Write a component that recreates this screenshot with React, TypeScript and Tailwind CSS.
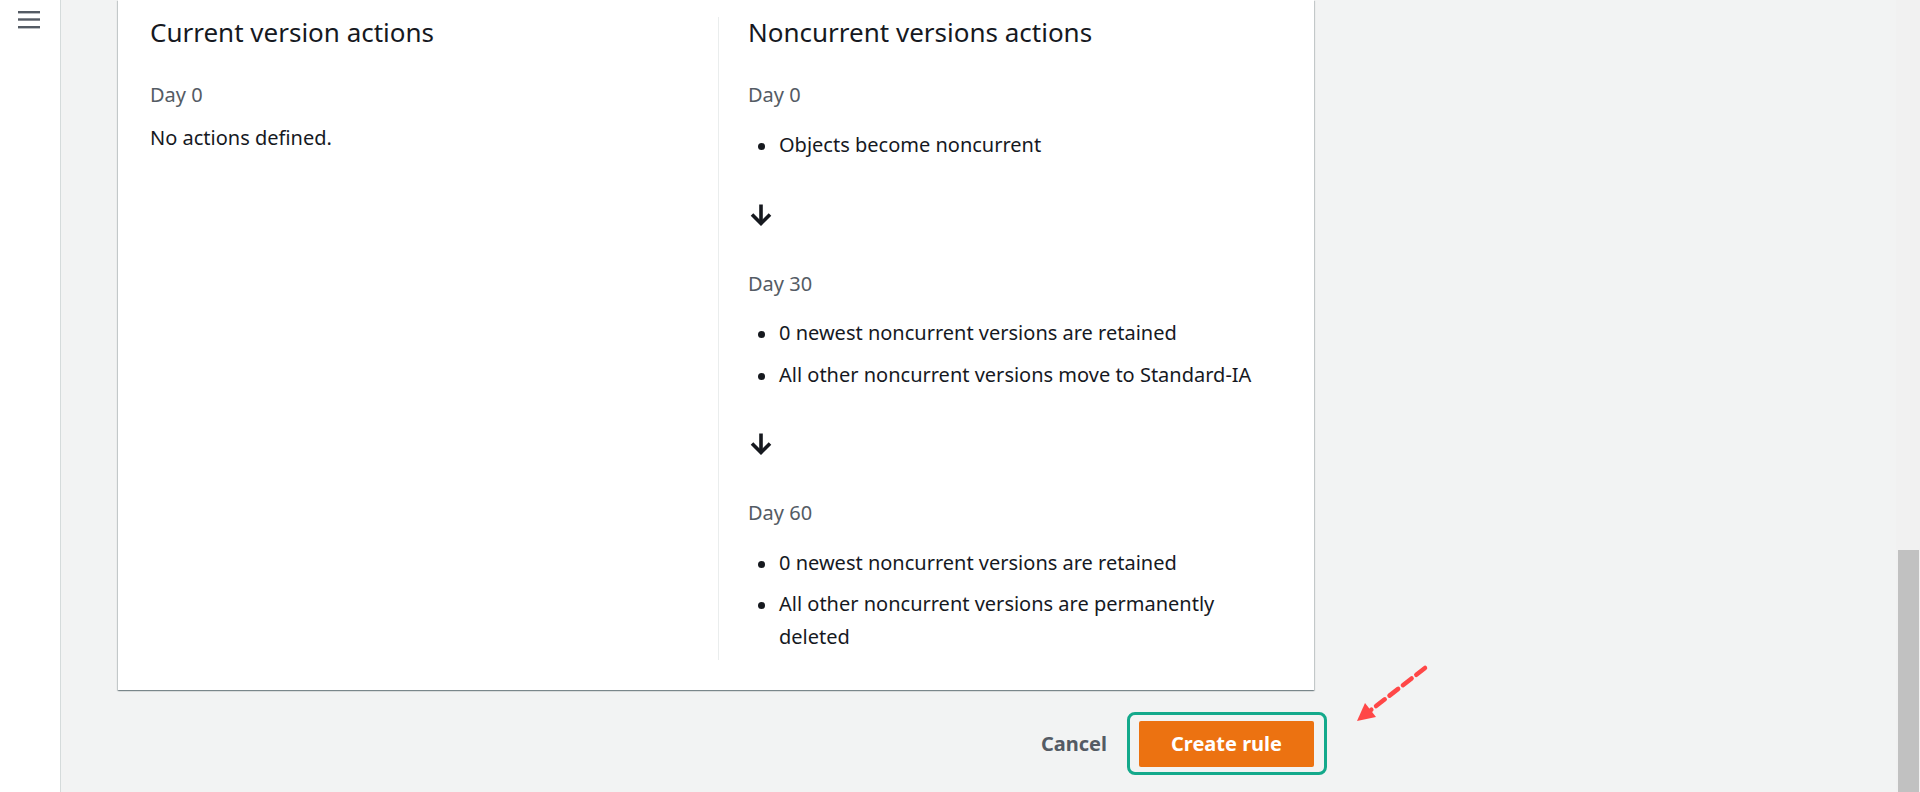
import React from "react";

const font = { fontFamily: '"Noto Sans", "Open Sans", Arial, sans-serif' };

function DownArrow() {
  return (
    <svg width="22" height="22" viewBox="0 0 22 22" className="block">
      <path d="M11 0.5 V19" stroke="#16191f" strokeWidth="3.6" fill="none" strokeLinecap="butt" />
      <path d="M2 10.5 L11 19.5 L20 10.5" stroke="#16191f" strokeWidth="3.6" fill="none" strokeLinejoin="miter" strokeLinecap="butt" />
    </svg>
  );
}

function Bullet({ children }: { children: React.ReactNode }) {
  return (
    <li className="flex items-start pl-[10px] text-[20px] leading-[33px] text-[#16191f]">
      <span className="mt-[15px] h-[7px] w-[7px] shrink-0 rounded-full bg-[#16191f]" />
      <span className="ml-[14px]">{children}</span>
    </li>
  );
}

function DayLabel({ children, className }: { children: React.ReactNode; className: string }) {
  return <div className={`text-[20px] leading-[33px] text-[#545b64] ${className}`}>{children}</div>;
}

export default function App() {
  return (
    <div className="flex h-[792px] w-[1920px] overflow-hidden bg-[#f2f3f3]" style={font}>
      <aside className="w-[61px] shrink-0 border-r border-[#d5dbdb] bg-white pl-[18px] pt-[10px]">
        <svg width="22" height="19" viewBox="0 0 22 19" className="block">
          <rect x="0" y="1" width="22" height="2.4" fill="#545b64" />
          <rect x="0" y="8.3" width="22" height="2.4" fill="#545b64" />
          <rect x="0" y="16" width="22" height="2.4" fill="#545b64" />
        </svg>
      </aside>

      <main className="flex-1 pl-[57px]">
        <div className="w-[1196px] bg-white pb-[30px] pt-[17px] shadow-[0_1px_1px_0_rgba(0,28,36,0.3),1px_1px_1px_0_rgba(0,28,36,0.15),-1px_1px_1px_0_rgba(0,28,36,0.15)]">
          <div className="grid grid-cols-[600px_1fr]">
            <div className="pl-[32px]">
              <h2 className="text-[26px] font-normal leading-[30px] text-[#16191f]">Current version actions</h2>
              <DayLabel className="mt-[31px]">Day 0</DayLabel>
              <p className="mt-[10px] text-[20px] leading-[33px] text-[#16191f]">No actions defined.</p>
            </div>
            <div className="border-l border-[#eaeded] pb-[7px] pl-[29px] pr-[30px]">
              <h2 className="text-[26px] font-normal leading-[30px] text-[#16191f]">Noncurrent versions actions</h2>
              <DayLabel className="mt-[31px]">Day 0</DayLabel>
              <ul className="mt-[17px]">
                <Bullet>Objects become noncurrent</Bullet>
              </ul>
              <div className="mt-[43px] pl-[2px]">
                <DownArrow />
              </div>
              <DayLabel className="mt-[41px]">Day 30</DayLabel>
              <ul className="mt-[16px] flex flex-col gap-[9px]">
                <Bullet>0 newest noncurrent versions are retained</Bullet>
                <Bullet>All other noncurrent versions move to Standard-IA</Bullet>
              </ul>
              <div className="mt-[42px] pl-[2px]">
                <DownArrow />
              </div>
              <DayLabel className="mt-[41px]">Day 60</DayLabel>
              <ul className="mt-[17px] flex flex-col gap-[8px]">
                <Bullet>0 newest noncurrent versions are retained</Bullet>
                <Bullet>
                  All other noncurrent versions are permanently
                  <br />
                  deleted
                </Bullet>
              </ul>
            </div>
          </div>
        </div>

        <div className="mt-[31px] flex w-[1196px] items-center justify-end gap-[32px]">
          <button className="text-[20px] font-bold leading-[46px] text-[#545b64]">Cancel</button>
          <div className="relative">
            <button className="flex h-[46px] w-[175px] items-center justify-center rounded-[2px] bg-[#ec7211] text-[20px] font-bold text-white">
              Create rule
            </button>
            <div className="pointer-events-none absolute -bottom-[8px] -left-[12px] -right-[13px] -top-[9px] rounded-[8px] border-[3px] border-[#14a98b]" />
            <svg
              className="pointer-events-none absolute left-[210px] top-[-60px]"
              width="90"
              height="70"
              viewBox="0 0 90 70"
            >
              <line x1="76" y1="7" x2="22" y2="49" stroke="#ff4747" strokeWidth="4.5" strokeDasharray="11 6" strokeLinecap="round" />
              <polygon points="8,60 27,56 16,42" fill="#ff4747" />
            </svg>
          </div>
        </div>
      </main>

      <div className="flex w-[24px] shrink-0 flex-col bg-[#f1f1f1] pl-[2px] pr-[1px]">
        <div className="flex-1" />
        <div className="h-[242px] bg-[#c1c1c1]" />
      </div>
    </div>
  );
}
